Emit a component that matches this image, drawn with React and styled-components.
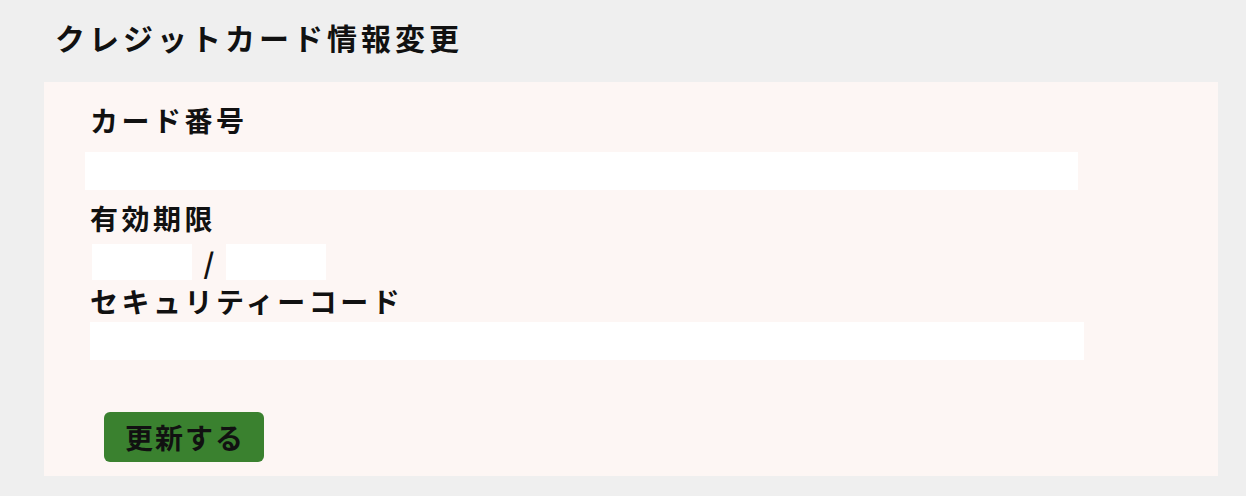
import React from 'react';
import styled, {createGlobalStyle} from 'styled-components';

const GlobalStyle = createGlobalStyle`
  body {
    margin: 0;
    background: #efefef;
    font-family: "Noto Sans CJK JP", "Noto Sans", sans-serif;
    color: #111;
  }
`

export default function App() {
    return (
        <>
            <GlobalStyle/>
            <Page>
                <Title>クレジットカード情報変更</Title>
                <Panel>
                    <Label>カード番号</Label>
                    <Input $top={14} $shift={-5} $width={993}/>
                    <Label $top={10}>有効期限</Label>
                    <ExpiryRow>
                        <SmallInput/>
                        <Slash>/</Slash>
                        <SmallInput/>
                    </ExpiryRow>
                    <Label $top={3}>セキュリティーコード</Label>
                    <Input $top={3} $shift={0} $width={994}/>
                    <Submit>更新する</Submit>
                </Panel>
            </Page>
        </>
    );
}

const Page = styled.div`
  padding-top: 16px;
  padding-bottom: 20px;
`

const Title = styled.h1`
  margin: 0 0 0 55px;
  height: 66px;
  font-size: 30px;
  line-height: 42px;
  font-weight: 700;
  letter-spacing: 4px;
`

const Panel = styled.div`
  margin-left: 44px;
  width: 1174px;
  height: 394px;
  box-sizing: border-box;
  background: #fdf6f4;
  padding: 20px 0 0 46px;
  display: flex;
  flex-direction: column;
  align-items: flex-start;
`

const Label = styled.div`
  margin-top: ${p => p.$top || 0}px;
  font-size: 28px;
  line-height: 36px;
  font-weight: 700;
  letter-spacing: 3.5px;
`

const Input = styled.input`
  margin: ${p => p.$top}px 0 0 ${p => p.$shift}px;
  width: ${p => p.$width}px;
  height: 38px;
  border: none;
  background: #fff;
  padding: 0;
  outline: none;
`

const ExpiryRow = styled.div`
  display: flex;
  align-items: center;
  margin: 8px 0 0 2px;
  height: 36px;
`

const SmallInput = styled.input`
  width: 100px;
  height: 36px;
  border: none;
  background: #fff;
  padding: 0;
`

const Slash = styled.span`
  width: 34px;
  text-align: center;
  font-size: 28px;
  font-weight: 700;
  line-height: 36px;
`

const Submit = styled.button`
  margin: 52px 0 0 14px;
  width: 160px;
  height: 50px;
  border: none;
  border-radius: 6px;
  background: #3a812f;
  color: #111;
  font-family: "Noto Sans CJK JP", "Noto Sans", sans-serif;
  font-size: 28px;
  font-weight: 700;
  letter-spacing: 2px;
  padding: 0 0 0 2px;
  cursor: pointer;
`
